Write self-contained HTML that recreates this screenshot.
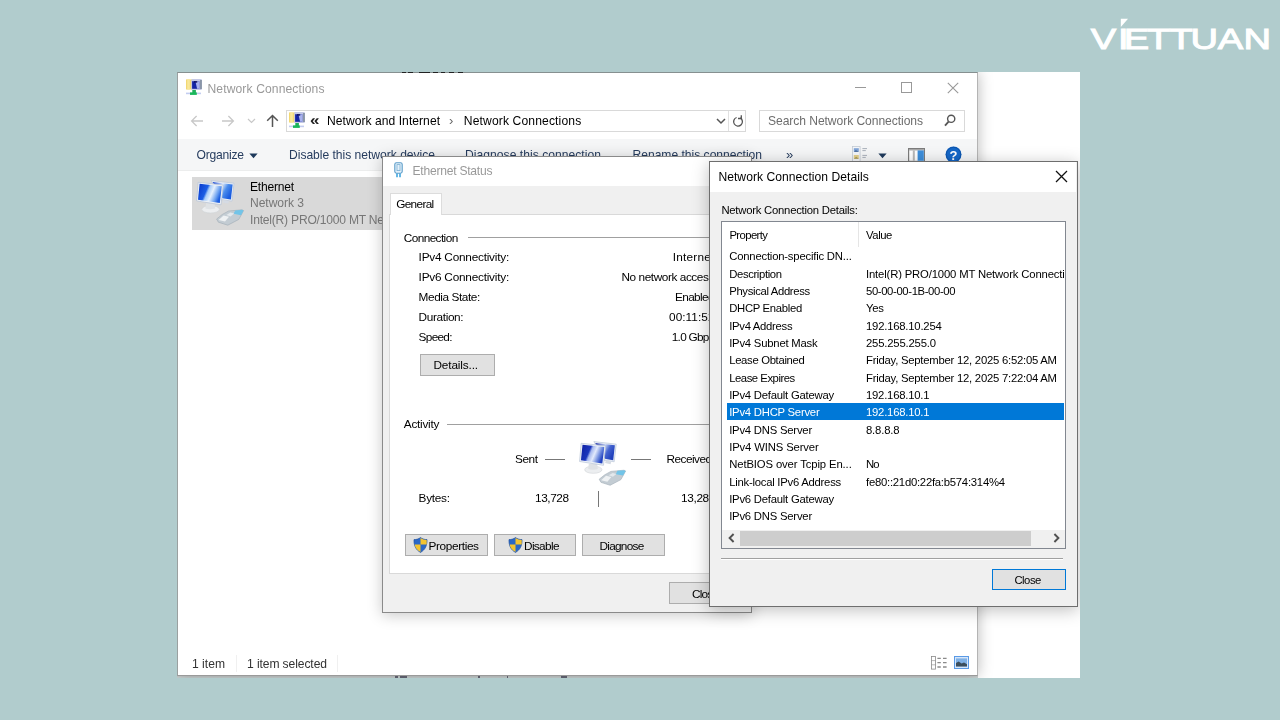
<!DOCTYPE html>
<html lang="en"><head><meta charset="utf-8"><title>Network Connection Details</title>
<style>

html,body{margin:0;padding:0}
body{width:1280px;height:720px;overflow:hidden;background:#b1cccd;position:relative;font-family:"Liberation Sans",sans-serif}
.abs{position:absolute}
.t{position:absolute;white-space:nowrap;line-height:normal;font-family:"Liberation Sans",sans-serif}
#shot{position:absolute;left:177px;top:72px;width:903px;height:606px;overflow:hidden;background:#fff}
#world{position:absolute;left:-177px;top:-72px;width:1280px;height:720px;will-change:transform}
.win{position:absolute;box-sizing:border-box;overflow:hidden}
#explorer{left:177px;top:72px;width:801px;height:604px;background:#fff;border:1px solid #9aa0a0;border-top-color:#869090;border-right-color:#b4b4b4;border-bottom-color:#9a9a9a;box-shadow:0 0 14px rgba(0,0,0,.28)}
#explorer .inner, .win .inner{position:absolute;left:0;top:0}
.box{position:absolute;box-sizing:border-box}
.btn{position:absolute;box-sizing:border-box;background:#e1e1e1;border:1px solid #adadad}

</style></head>
<body>
<div id="shot"><div id="world">
<div class="box" style="left:177px;top:675px;width:801px;height:3px;background:linear-gradient(#c2c8c8,#ced6d6)"></div>
<div class="win" id="explorer"></div>
<svg class="abs" style="left:186px;top:79px" width="16" height="17" viewBox="0 0 16 17">
<rect x="0" y=".4" width="6.2" height="10.1" fill="#f2d873"/><rect x="1.2" y=".4" width="2.6" height="10.1" fill="#f8e79a"/>
<rect x="5.2" y="0" width="10.7" height="11" rx="1" fill="#c4c9e6"/><rect x="14" y="1" width="1.9" height="9" fill="#8a96a8"/>
<rect x="6.1" y="2.2" width="7.2" height="7.6" fill="#1424a4"/><path d="M9.4 2.2h3.9v7.6h-2.2z" fill="#a8b2ee"/><rect x="8" y="2.2" width="3.2" height="1.4" fill="#0c0c58"/>
<rect x="0" y="13.6" width="15" height="1.6" fill="#c3cdf0"/><rect x="6.3" y="11" width="3.6" height="3" fill="#21b25c"/><rect x="4" y="13.4" width="6.8" height="2.5" fill="#19b85a"/>
</svg>
<div class="box" style="left:402px;top:72px;width:62px;height:1.3px;background:linear-gradient(90deg,transparent 0.0px,#222 0.0px,#222 4.2px,transparent 4.2px,transparent 6.0px,#222 6.0px,#222 10.8px,transparent 10.8px,transparent 17.4px,#222 17.4px,#222 27.7px,transparent 27.7px,transparent 31.4px,#222 31.4px,#222 36.1px,transparent 36.1px,transparent 38.9px,#222 38.9px,#222 42.7px,transparent 42.7px,transparent 47.4px,#222 47.4px,#222 52.0px,transparent 52.0px,transparent 55.8px,#222 55.8px,#222 61.4px,transparent 61.4px)"></div>
<span class="t" id="t0" style="left:207.50px;top:81.65px;font-size:12.1px;color:#999;letter-spacing:0.114px;">Network Connections</span>
<div class="box" style="left:855px;top:87px;width:11px;height:1px;background:#999"></div>
<div class="box" style="left:901px;top:82px;width:11px;height:11px;border:1px solid #999"></div>
<svg class="abs" style="left:947px;top:82px" width="12" height="12" viewBox="0 0 12 12"><path d="M.8.8l10.4 10.4M11.2.8L.8 11.2" stroke="#999" stroke-width="1.1" fill="none"/></svg>
<svg class="abs" style="left:190px;top:114px" width="14" height="14" viewBox="0 0 14 14"><path d="M13 7H1.6M6.6 2L1.6 7l5 5" stroke="#c8c8c8" stroke-width="1.3" fill="none"/></svg>
<svg class="abs" style="left:221px;top:114px" width="14" height="14" viewBox="0 0 14 14"><path d="M1 7h11.4M7.4 2l5 5-5 5" stroke="#c8c8c8" stroke-width="1.3" fill="none"/></svg>
<svg class="abs" style="left:247px;top:118px" width="9" height="6" viewBox="0 0 9 6"><path d="M1 1l3.5 3.5L8 1" stroke="#c8c8c8" stroke-width="1.2" fill="none"/></svg>
<svg class="abs" style="left:266px;top:114px" width="13" height="14" viewBox="0 0 13 14"><path d="M6.5 13V1.6M1.2 6.8L6.5 1.5l5.3 5.3" stroke="#555" stroke-width="1.5" fill="none"/></svg>
<div class="box" style="left:286px;top:110px;width:460px;height:22px;border:1px solid #d9d9d9;background:#fff"></div>
<svg class="abs" style="left:289px;top:112px" width="16" height="17" viewBox="0 0 16 17">
<rect x="0" y=".4" width="6.2" height="10.1" fill="#f2d873"/><rect x="1.2" y=".4" width="2.6" height="10.1" fill="#f8e79a"/>
<rect x="5.2" y="0" width="10.7" height="11" rx="1" fill="#c4c9e6"/><rect x="14" y="1" width="1.9" height="9" fill="#8a96a8"/>
<rect x="6.1" y="2.2" width="7.2" height="7.6" fill="#1424a4"/><path d="M9.4 2.2h3.9v7.6h-2.2z" fill="#a8b2ee"/><rect x="8" y="2.2" width="3.2" height="1.4" fill="#0c0c58"/>
<rect x="0" y="13.6" width="15" height="1.6" fill="#c3cdf0"/><rect x="6.3" y="11" width="3.6" height="3" fill="#21b25c"/><rect x="4" y="13.4" width="6.8" height="2.5" fill="#19b85a"/>
</svg>
<span class="t" id="t1" style="left:309.80px;top:111.68px;font-size:14.5px;color:#222;letter-spacing:-0.932px;font-weight:bold;transform:scaleX(1.18);transform-origin:left;">«</span>
<span class="t" id="t2" style="left:327.00px;top:113.65px;font-size:12.1px;color:#000;letter-spacing:0.039px;">Network and Internet</span>
<span class="t" id="t3" style="left:449.00px;top:112.64px;font-size:13px;color:#666;letter-spacing:0.656px;">›</span>
<span class="t" id="t4" style="left:463.80px;top:113.65px;font-size:12.1px;color:#000;letter-spacing:0.136px;">Network Connections</span>
<svg class="abs" style="left:716px;top:118px" width="10" height="7" viewBox="0 0 10 7"><path d="M1 1l4 4 4-4" stroke="#555" stroke-width="1.5" fill="none"/></svg>
<div class="box" style="left:728px;top:111px;width:1px;height:20px;background:#e1e1e1"></div>
<svg class="abs" style="left:732px;top:114px" width="12" height="14" viewBox="0 0 12 14"><path d="M8.3 3.9A4.4 4.4 0 1 1 4.6 3.5" stroke="#555" stroke-width="1.3" fill="none"/><path d="M9.3 1.2v3.3H6" stroke="#555" stroke-width="1.3" fill="none"/></svg>
<div class="box" style="left:759px;top:110px;width:206px;height:22px;border:1px solid #d9d9d9;background:#fff"></div>
<span class="t" id="t5" style="left:768.00px;top:113.85px;font-size:12.1px;color:#6d6d6d;letter-spacing:-0.065px;">Search Network Connections</span>
<svg class="abs" style="left:944px;top:114px" width="12" height="13" viewBox="0 0 12 13"><circle cx="7.2" cy="4.8" r="3.6" stroke="#555" stroke-width="1.4" fill="none"/><path d="M4.6 7.6L1 11.6" stroke="#555" stroke-width="1.8"/></svg>
<div class="box" style="left:178px;top:139px;width:799px;height:32px;background:#f5f6f7;border-bottom:1px solid #eceded"></div>
<span class="t" id="t6" style="left:196.50px;top:148.35px;font-size:12.1px;color:#263c5e;letter-spacing:-0.225px;">Organize</span>
<svg class="abs" style="left:249px;top:152.5px" width="9" height="6" viewBox="0 0 9 6"><path d="M.4.6h8.2L4.5 5.2z" fill="#1e395b"/></svg>
<span class="t" id="t7" style="left:289.00px;top:148.35px;font-size:12.1px;color:#263c5e;letter-spacing:-0.021px;">Disable this network device</span>
<span class="t" id="t8" style="left:465.00px;top:148.35px;font-size:12.1px;color:#263c5e;letter-spacing:0.037px;">Diagnose this connection</span>
<span class="t" id="t9" style="left:632.50px;top:148.35px;font-size:12.1px;color:#263c5e;letter-spacing:-0.012px;">Rename this connection</span>
<span class="t" id="t10" style="left:786.00px;top:146.63px;font-size:13px;color:#263c5e;letter-spacing:0.766px;">»</span>
<svg class="abs" style="left:852px;top:146px" width="17" height="17" viewBox="0 0 17 17"><rect x=".5" y=".5" width="7.6" height="16" fill="#f4f6f9" stroke="#c3cad4" stroke-width=".8"/><rect x="1.8" y="2.2" width="5" height="3.6" fill="#7fa3d6"/><path d="M1.8 5.8l2-1.6 3 1.6z" fill="#3f5f8f"/><rect x="1.8" y="9" width="5" height="3.8" fill="#e3cf8a"/><path d="M1.8 12.8l2.4-2 2.6 2z" fill="#a89a5a"/><path d="M10.4 2.6h4.6M10.4 4.6h3.4M10.4 9.4h4.6M10.4 11.4h3.4" stroke="#a9b0ba" stroke-width="1"/></svg>
<svg class="abs" style="left:878px;top:152.5px" width="9" height="6" viewBox="0 0 9 6"><path d="M.4.6h8.2L4.5 5.2z" fill="#1e395b"/></svg>
<svg class="abs" style="left:908px;top:148.4px" width="17" height="14" viewBox="0 0 17 14"><rect x=".6" y=".6" width="15.8" height="12.8" fill="#fff" stroke="#7c7c7c" stroke-width="1.2"/><rect x="1.2" y="1.2" width="14.6" height="1.2" fill="#9a9a9a"/><rect x="9.6" y="2.4" width="6.2" height="10.4" fill="#3d8edb"/><path d="M5.8 2.4v10.4" stroke="#b8b8b8" stroke-width="2"/></svg>
<svg class="abs" style="left:945px;top:146px" width="17" height="17" viewBox="0 0 17 17"><circle cx="8.5" cy="8.5" r="8" fill="#1467c8"/><circle cx="8.5" cy="8.5" r="7.2" fill="none" stroke="#0b4fa3" stroke-width=".8"/></svg>
<span class="t" id="t11" style="left:949.60px;top:147.63px;font-size:13px;color:#fff;font-weight:bold;">?</span>
<div class="box" style="left:192px;top:177px;width:260px;height:52.5px;background:#d9d9d9"></div>
<svg class="abs" style="left:196px;top:179.5px" width="49.0" height="46.0" viewBox="0 0 49 46">
<defs><linearGradient id="g196a" x1="0" y1="0.1" x2="1" y2="0.45"><stop offset="0" stop-color="#0838cc"/><stop offset="0.38" stop-color="#1c5ee4"/><stop offset="0.47" stop-color="#a8ccf8"/><stop offset="0.64" stop-color="#e6f1fd"/><stop offset="0.86" stop-color="#6aa0f0"/><stop offset="1" stop-color="#1c5ee0"/></linearGradient>
<linearGradient id="g196b" x1="0" y1="0" x2="1" y2="0.5"><stop offset="0" stop-color="#0a3cd0"/><stop offset="0.45" stop-color="#dce9fc"/><stop offset="0.7" stop-color="#4a8cec"/><stop offset="1" stop-color="#1a5ce0"/></linearGradient></defs>
<path d="M15.2 .6 L38 3.2 L35.9 21.2 L25.5 19.6z" fill="#e9eef5" stroke="#b9c6d8" stroke-width=".7"/>
<path d="M16.6 2 L36.6 4.4 L34.9 19.6 L26.4 18.2z" fill="url(#g196b)"/>
<path d="M27.4 20l5.6 1-.8 2.6-5.6-1.2z" fill="#d5dbe4"/>
<ellipse cx="14.6" cy="29.3" rx="8.8" ry="3.7" fill="#eceef0" stroke="#cfd3d6" stroke-width=".6"/>
<path d="M10 23.2h8.6l.6 5.4c-3 1-7 1-9.8 0z" fill="#dfe2e5"/>
<path d="M2.2 2.3 L27.2 5 L25 24.8 L.6 20.9z" fill="#eef2f7" stroke="#b4c2d6" stroke-width=".7"/>
<path d="M3.6 3.8 L25.8 6.2 L23.8 23 L2 19.7z" fill="url(#g196a)"/>
<path d="M20.6 39 L26.4 34.4 L32.6 31 L46 29.8 L47.6 30.6 L42.8 39.4 L31.8 45.2 L22.4 42.2z" fill="#c3ccd3" stroke="#9fabb5" stroke-width=".6"/>
<path d="M39.2 30.4 L46 29.8 L47.6 30.6 L45 35.2 L37.6 33.8z" fill="#72c4e8"/>
<path d="M22.6 40 l5-4.6 5.4 1.4-4 4.8z" fill="#eef1f3"/><path d="M30.4 35 l4-2.4 3.8 1-3.6 3z" fill="#e3e8ec"/>
</svg>
<span class="t" id="t12" style="left:250.00px;top:180.25px;font-size:12.1px;color:#000;letter-spacing:-0.246px;">Ethernet</span>
<span class="t" id="t13" style="left:250.00px;top:196.45px;font-size:12.1px;color:#777;letter-spacing:-0.057px;">Network 3</span>
<span class="t" id="t14" style="left:250.00px;top:212.65px;font-size:12.1px;color:#777;letter-spacing:-0.219px;">Intel(R) PRO/1000 MT Network Conn...</span>
<span class="t" id="t15" style="left:192.00px;top:656.65px;font-size:12.1px;color:#333;letter-spacing:0.013px;">1 item</span>
<div class="box" style="left:236px;top:655px;width:1px;height:17px;background:#f0f0f0"></div>
<span class="t" id="t16" style="left:247.00px;top:656.65px;font-size:12.1px;color:#333;letter-spacing:-0.096px;">1 item selected</span>
<div class="box" style="left:337px;top:655px;width:1px;height:17px;background:#f0f0f0"></div>
<svg class="abs" style="left:931px;top:656px" width="17" height="14" viewBox="0 0 17 14"><rect x=".5" y=".5" width="4" height="12.6" fill="#fff" stroke="#8a8a8a" stroke-width=".8"/><path d="M.5 4.6h4M.5 8.8h4" stroke="#8a8a8a" stroke-width=".6"/><path d="M6.4 2.4h3.4M12 2.4h3.6M6.4 6.7h3.4M12 6.7h3.6M6.4 11h3.4M12 11h3.6" stroke="#8a8a8a" stroke-width="1.3"/></svg>
<svg class="abs" style="left:954px;top:656px" width="15" height="13" viewBox="0 0 15 13"><rect x=".5" y=".5" width="14" height="12" fill="#d6e6fa" stroke="#5a9ae6" stroke-width="1"/><rect x="2" y="2.4" width="11" height="8" fill="#7fb0e4"/><path d="M2 10.4V7l2.6-1.6 3 2.2 2.4-1 3 1.6v2.2z" fill="#3c4e5c"/></svg>
<div class="box" style="left:395px;top:676px;width:173px;height:1.6px;background:linear-gradient(90deg,transparent 0.5px,#445 0.5px,#445 3.0px,transparent 3.0px,transparent 5.0px,#445 5.0px,#445 9.0px,transparent 9.0px,transparent 9.5px,#445 9.5px,#445 12.0px,transparent 12.0px,transparent 83.5px,#445 83.5px,#445 85.0px,transparent 85.0px,transparent 111.8px,#445 111.8px,#445 113.2px,transparent 113.2px,transparent 166.0px,#445 166.0px,#445 168.0px,transparent 168.0px,transparent 168.5px,#445 168.5px,#445 172.0px,transparent 172.0px);opacity:.8"></div>
<div class="win" id="ethstatus" style="left:382px;top:155.5px;width:370px;height:457.6px;background:#f0f0f0;border:1px solid #8a8a8a;box-shadow:0 2px 14px rgba(0,0,0,.22)"></div>
<div class="box" style="left:383px;top:157px;width:368px;height:28.5px;background:#fff"></div>
<svg class="abs" style="left:394.4px;top:161.6px" width="9" height="16" viewBox="0 0 9 16"><rect x=".8" y=".8" width="7.4" height="10.4" rx="1.6" fill="#e4f1fa" stroke="#5b9cc8" stroke-width="1.1"/><rect x="3" y="2.6" width="3" height="6" fill="none" stroke="#7aaed2" stroke-width=".8"/><path d="M3 11.4v3.8M6 11.4v3.8" stroke="#35a0dc" stroke-width="1.5"/></svg>
<span class="t" id="t17" style="left:412.50px;top:163.85px;font-size:12.1px;color:#999;letter-spacing:-0.241px;">Ethernet Status</span>
<div class="box" style="left:389px;top:213.5px;width:356px;height:360px;background:#fff;border:1px solid #d9d9d9"></div>
<div class="box" style="left:389.5px;top:193px;width:52px;height:22px;background:#fff;border:1px solid #dcdcdc;border-bottom:none"></div>
<span class="t" id="t18" style="left:396.20px;top:196.72px;font-size:11.8px;color:#000;letter-spacing:-0.664px;">General</span>
<span class="t" id="t19" style="left:403.80px;top:230.52px;font-size:11.8px;color:#000;letter-spacing:-0.588px;">Connection</span>
<div class="box" style="left:468px;top:236.9px;width:270px;height:1px;background:#a0a0a0"></div>
<span class="t" id="t20" style="left:418.60px;top:250.02px;font-size:11.8px;color:#000;letter-spacing:-0.225px;">IPv4 Connectivity:</span>
<span class="t" id="t21" style="left:672.80px;top:250.02px;font-size:11.8px;color:#000;letter-spacing:0.212px;">Internet</span>
<span class="t" id="t22" style="left:418.60px;top:270.02px;font-size:11.8px;color:#000;letter-spacing:-0.225px;">IPv6 Connectivity:</span>
<span class="t" id="t23" style="left:621.40px;top:270.02px;font-size:11.8px;color:#000;letter-spacing:-0.417px;">No network access</span>
<span class="t" id="t24" style="left:418.60px;top:290.02px;font-size:11.8px;color:#000;letter-spacing:-0.412px;">Media State:</span>
<span class="t" id="t25" style="left:675.00px;top:290.02px;font-size:11.8px;color:#000;letter-spacing:-0.633px;">Enabled</span>
<span class="t" id="t26" style="left:418.60px;top:310.02px;font-size:11.8px;color:#000;letter-spacing:-0.359px;">Duration:</span>
<span class="t" id="t27" style="left:669.00px;top:310.02px;font-size:11.8px;color:#000;letter-spacing:0.065px;">00:11:52</span>
<span class="t" id="t28" style="left:418.60px;top:330.02px;font-size:11.8px;color:#000;letter-spacing:-0.698px;">Speed:</span>
<span class="t" id="t29" style="left:671.80px;top:330.02px;font-size:11.8px;color:#000;letter-spacing:-0.739px;">1.0 Gbps</span>
<div class="btn" style="left:420px;top:354px;width:75px;height:22px"></div>
<span class="t" id="t30" style="left:433.50px;top:358.32px;font-size:11.8px;color:#000;letter-spacing:-0.145px;">Details...</span>
<span class="t" id="t31" style="left:403.80px;top:417.12px;font-size:11.8px;color:#000;letter-spacing:-0.254px;">Activity</span>
<div class="box" style="left:447px;top:423.5px;width:291px;height:1px;background:#a0a0a0"></div>
<span class="t" id="t32" style="left:515.00px;top:451.92px;font-size:11.8px;color:#000;letter-spacing:-0.427px;">Sent</span>
<div class="box" style="left:545px;top:459px;width:20px;height:1.2px;background:#777"></div>
<svg class="abs" style="left:578.5px;top:441px" width="48.0" height="45.1" viewBox="0 0 49 46">
<defs><linearGradient id="g578a" x1="0" y1="0.1" x2="1" y2="0.45"><stop offset="0" stop-color="#0e20a4"/><stop offset="0.38" stop-color="#1a36bc"/><stop offset="0.47" stop-color="#a6b8ee"/><stop offset="0.64" stop-color="#e2eafb"/><stop offset="0.86" stop-color="#6684dc"/><stop offset="1" stop-color="#2444c0"/></linearGradient>
<linearGradient id="g578b" x1="0" y1="0" x2="1" y2="0.5"><stop offset="0" stop-color="#1224a4"/><stop offset="0.45" stop-color="#c4d2f4"/><stop offset="0.7" stop-color="#4464d0"/><stop offset="1" stop-color="#2040bc"/></linearGradient></defs>
<path d="M15.2 .6 L38 3.2 L35.9 21.2 L25.5 19.6z" fill="#e9eef5" stroke="#b9c6d8" stroke-width=".7"/>
<path d="M16.6 2 L36.6 4.4 L34.9 19.6 L26.4 18.2z" fill="url(#g578b)"/>
<path d="M27.4 20l5.6 1-.8 2.6-5.6-1.2z" fill="#d5dbe4"/>
<ellipse cx="14.6" cy="29.3" rx="8.8" ry="3.7" fill="#eceef0" stroke="#cfd3d6" stroke-width=".6"/>
<path d="M10 23.2h8.6l.6 5.4c-3 1-7 1-9.8 0z" fill="#dfe2e5"/>
<path d="M2.2 2.3 L27.2 5 L25 24.8 L.6 20.9z" fill="#eef2f7" stroke="#b4c2d6" stroke-width=".7"/>
<path d="M3.6 3.8 L25.8 6.2 L23.8 23 L2 19.7z" fill="url(#g578a)"/>
<path d="M20.6 39 L26.4 34.4 L32.6 31 L46 29.8 L47.6 30.6 L42.8 39.4 L31.8 45.2 L22.4 42.2z" fill="#c3ccd3" stroke="#9fabb5" stroke-width=".6"/>
<path d="M39.2 30.4 L46 29.8 L47.6 30.6 L45 35.2 L37.6 33.8z" fill="#72c4e8"/>
<path d="M22.6 40 l5-4.6 5.4 1.4-4 4.8z" fill="#eef1f3"/><path d="M30.4 35 l4-2.4 3.8 1-3.6 3z" fill="#e3e8ec"/>
</svg>
<div class="box" style="left:631px;top:459px;width:20px;height:1.2px;background:#777"></div>
<span class="t" id="t33" style="left:666.50px;top:451.92px;font-size:11.8px;color:#000;letter-spacing:-0.527px;">Received</span>
<span class="t" id="t34" style="left:418.60px;top:491.12px;font-size:11.8px;color:#000;letter-spacing:-0.279px;">Bytes:</span>
<span class="t" id="t35" style="left:535.00px;top:491.12px;font-size:11.8px;color:#000;letter-spacing:-0.419px;">13,728</span>
<div class="box" style="left:598px;top:491px;width:1.2px;height:15.5px;background:#777"></div>
<span class="t" id="t36" style="left:681.00px;top:491.12px;font-size:11.8px;color:#000;letter-spacing:-0.339px;">13,284</span>
<div class="btn" style="left:405px;top:534.4px;width:82.5px;height:21.6px"></div>
<svg class="abs" style="left:412.5px;top:537.2px" width="15" height="16" viewBox="0 0 15 16">
<path d="M7.5 .6 C5.6 2 3.4 2.6 1 2.6 C.8 8.6 2.8 12.8 7.5 15.4 C12.2 12.8 14.2 8.6 14 2.6 C11.6 2.6 9.4 2 7.5 .6z" fill="#2a68c8" stroke="#1d4f9e" stroke-width=".7"/>
<path d="M7.5 .9 C9.4 2.2 11.6 2.9 13.7 2.9 L13.7 7.6 L7.5 7.6z" fill="#f4c430"/>
<path d="M7.5 7.6 L1.6 7.6 C2.2 10.8 4 13.4 7.5 15z" fill="#f4c430"/>
</svg>
<span class="t" id="t37" style="left:428.50px;top:538.72px;font-size:11.8px;color:#000;letter-spacing:-0.365px;">Properties</span>
<div class="btn" style="left:493.6px;top:534.4px;width:82.5px;height:21.6px"></div>
<svg class="abs" style="left:507.8px;top:537.2px" width="15" height="16" viewBox="0 0 15 16">
<path d="M7.5 .6 C5.6 2 3.4 2.6 1 2.6 C.8 8.6 2.8 12.8 7.5 15.4 C12.2 12.8 14.2 8.6 14 2.6 C11.6 2.6 9.4 2 7.5 .6z" fill="#2a68c8" stroke="#1d4f9e" stroke-width=".7"/>
<path d="M7.5 .9 C9.4 2.2 11.6 2.9 13.7 2.9 L13.7 7.6 L7.5 7.6z" fill="#f4c430"/>
<path d="M7.5 7.6 L1.6 7.6 C2.2 10.8 4 13.4 7.5 15z" fill="#f4c430"/>
</svg>
<span class="t" id="t38" style="left:524.00px;top:538.72px;font-size:11.8px;color:#000;letter-spacing:-0.641px;">Disable</span>
<div class="btn" style="left:582px;top:534.4px;width:83px;height:21.6px"></div>
<span class="t" id="t39" style="left:599.60px;top:538.72px;font-size:11.8px;color:#000;letter-spacing:-0.749px;">Diagnose</span>
<div class="btn" style="left:669px;top:582px;width:75px;height:21.6px"></div>
<span class="t" id="t40" style="left:692.00px;top:586.72px;font-size:11.8px;color:#000;letter-spacing:-0.793px;">Close</span>
<div class="win" id="details" style="left:709px;top:161px;width:368.6px;height:445.6px;background:#f0f0f0;border:1px solid #6e6e6e;box-shadow:0 3px 16px rgba(0,0,0,.26)"></div>
<div class="box" style="left:710px;top:162px;width:366px;height:30px;background:#fff"></div>
<span class="t" id="t41" style="left:718.40px;top:169.65px;font-size:12.1px;color:#000;letter-spacing:0.047px;">Network Connection Details</span>
<svg class="abs" style="left:1055px;top:170px" width="13" height="13" viewBox="0 0 13 13"><path d="M1 1l11 11M12 1L1 12" stroke="#111" stroke-width="1.25" fill="none"/></svg>
<span class="t" id="t42" style="left:721.40px;top:203.77px;font-size:11.3px;color:#000;letter-spacing:-0.236px;">Network Connection Details:</span>
<div class="box" style="left:721px;top:221px;width:345px;height:327.8px;background:#fff;border:1px solid #828790"></div>
<span class="t" id="t43" style="left:729.40px;top:228.57px;font-size:11.3px;color:#000;letter-spacing:-0.586px;">Property</span>
<div class="box" style="left:858px;top:222px;width:1px;height:25px;background:#e5e5e5"></div>
<span class="t" id="t44" style="left:866.00px;top:228.57px;font-size:11.3px;color:#000;letter-spacing:-0.416px;">Value</span>
<div class="box" style="left:727px;top:403.4px;width:337px;height:16.8px;background:#0078d7"></div>
<span class="t" id="t45" style="left:729.20px;top:250.17px;font-size:11.3px;color:#000;letter-spacing:-0.203px;">Connection-specific DN...</span>
<span class="t" id="t46" style="left:729.20px;top:267.51px;font-size:11.3px;color:#000;letter-spacing:-0.372px;">Description</span>
<span class="t" id="t47" style="left:866.00px;top:267.51px;font-size:11.3px;color:#000;letter-spacing:-0.159px;clip-path:inset(0 12.4px 0 0);">Intel(R) PRO/1000 MT Network Connection</span>
<span class="t" id="t48" style="left:729.20px;top:284.84px;font-size:11.3px;color:#000;letter-spacing:-0.335px;">Physical Address</span>
<span class="t" id="t49" style="left:866.00px;top:284.84px;font-size:11.3px;color:#000;letter-spacing:-0.373px;">50-00-00-1B-00-00</span>
<span class="t" id="t50" style="left:729.20px;top:302.17px;font-size:11.3px;color:#000;letter-spacing:-0.310px;">DHCP Enabled</span>
<span class="t" id="t51" style="left:866.00px;top:302.17px;font-size:11.3px;color:#000;letter-spacing:-0.319px;">Yes</span>
<span class="t" id="t52" style="left:729.20px;top:319.51px;font-size:11.3px;color:#000;letter-spacing:-0.288px;">IPv4 Address</span>
<span class="t" id="t53" style="left:866.00px;top:319.51px;font-size:11.3px;color:#000;letter-spacing:-0.210px;">192.168.10.254</span>
<span class="t" id="t54" style="left:729.20px;top:336.84px;font-size:11.3px;color:#000;letter-spacing:-0.212px;">IPv4 Subnet Mask</span>
<span class="t" id="t55" style="left:866.00px;top:336.84px;font-size:11.3px;color:#000;letter-spacing:-0.188px;">255.255.255.0</span>
<span class="t" id="t56" style="left:729.20px;top:354.17px;font-size:11.3px;color:#000;letter-spacing:-0.322px;">Lease Obtained</span>
<span class="t" id="t57" style="left:866.00px;top:354.17px;font-size:11.3px;color:#000;letter-spacing:-0.236px;">Friday, September 12, 2025 6:52:05 AM</span>
<span class="t" id="t58" style="left:729.20px;top:371.50px;font-size:11.3px;color:#000;letter-spacing:-0.466px;">Lease Expires</span>
<span class="t" id="t59" style="left:866.00px;top:371.50px;font-size:11.3px;color:#000;letter-spacing:-0.236px;">Friday, September 12, 2025 7:22:04 AM</span>
<span class="t" id="t60" style="left:729.20px;top:388.84px;font-size:11.3px;color:#000;letter-spacing:-0.225px;">IPv4 Default Gateway</span>
<span class="t" id="t61" style="left:866.00px;top:388.84px;font-size:11.3px;color:#000;letter-spacing:-0.224px;">192.168.10.1</span>
<span class="t" id="t62" style="left:729.20px;top:406.17px;font-size:11.3px;color:#fff;letter-spacing:-0.231px;">IPv4 DHCP Server</span>
<span class="t" id="t63" style="left:866.00px;top:406.17px;font-size:11.3px;color:#fff;letter-spacing:-0.224px;">192.168.10.1</span>
<span class="t" id="t64" style="left:729.20px;top:423.50px;font-size:11.3px;color:#000;letter-spacing:-0.215px;">IPv4 DNS Server</span>
<span class="t" id="t65" style="left:866.00px;top:423.50px;font-size:11.3px;color:#000;letter-spacing:-0.160px;">8.8.8.8</span>
<span class="t" id="t66" style="left:729.20px;top:440.84px;font-size:11.3px;color:#000;letter-spacing:-0.137px;">IPv4 WINS Server</span>
<span class="t" id="t67" style="left:729.20px;top:458.17px;font-size:11.3px;color:#000;letter-spacing:-0.121px;">NetBIOS over Tcpip En...</span>
<span class="t" id="t68" style="left:866.00px;top:458.17px;font-size:11.3px;color:#000;letter-spacing:-0.853px;">No</span>
<span class="t" id="t69" style="left:729.20px;top:475.50px;font-size:11.3px;color:#000;letter-spacing:-0.246px;">Link-local IPv6 Address</span>
<span class="t" id="t70" style="left:866.00px;top:475.50px;font-size:11.3px;color:#000;letter-spacing:-0.244px;">fe80::21d0:22fa:b574:314%4</span>
<span class="t" id="t71" style="left:729.20px;top:492.84px;font-size:11.3px;color:#000;letter-spacing:-0.225px;">IPv6 Default Gateway</span>
<span class="t" id="t72" style="left:729.20px;top:510.17px;font-size:11.3px;color:#000;letter-spacing:-0.215px;">IPv6 DNS Server</span>
<div class="box" style="left:722px;top:530.3px;width:343px;height:17.4px;background:#f0f0f0"></div>
<div class="box" style="left:740px;top:530.5px;width:290.6px;height:15.2px;background:#cdcdcd"></div>
<svg class="abs" style="left:728px;top:533px" width="7" height="10" viewBox="0 0 7 10"><path d="M5.6 1L1.6 5l4 4" stroke="#505050" stroke-width="1.9" fill="none"/></svg>
<svg class="abs" style="left:1052.6px;top:533px" width="7" height="10" viewBox="0 0 7 10"><path d="M1.4 1l4 4-4 4" stroke="#505050" stroke-width="1.9" fill="none"/></svg>
<div class="box" style="left:721px;top:557.5px;width:342px;height:2px;background:#a0a0a0;border-bottom:1px solid #fff"></div>
<div class="btn" style="left:992px;top:569.2px;width:74px;height:21px;border:1.7px solid #0078d7"></div>
<span class="t" id="t73" style="left:1014.40px;top:574.17px;font-size:11.3px;color:#000;letter-spacing:-0.473px;">Close</span>
</div></div>
<svg class="abs" style="left:1084px;top:12px" width="192" height="44" viewBox="0 0 192 44"><text transform="scale(1.3,1)" x="5.23 26.08 30.62 48.54 65.69 82.00 102.85 122.77" y="36.8" font-family="Liberation Sans, sans-serif" font-size="29.3" fill="#fff" stroke="#fff" stroke-width="1" stroke-linejoin="miter">VIETTUAN</text><path d="M36.8 6.8h7.2L36.8 14.9z" fill="#fff"/></svg>
</body></html>
